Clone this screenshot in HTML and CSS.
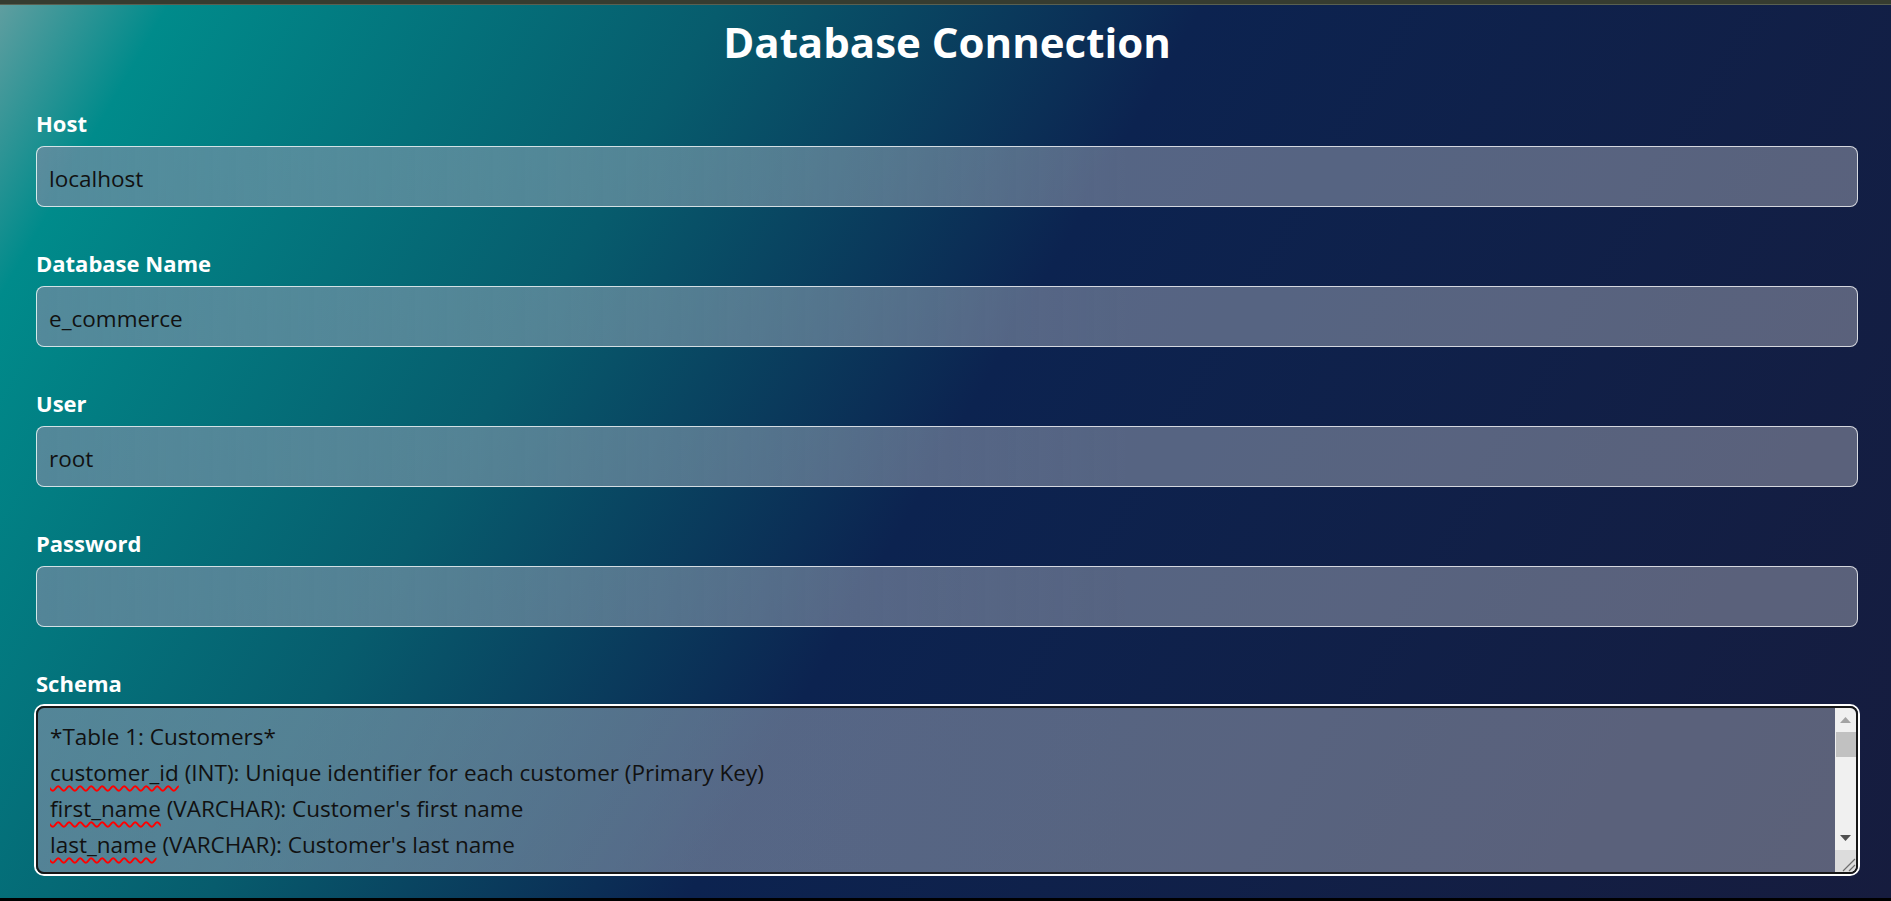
FILE: index.html
```html
<!DOCTYPE html>
<html lang="en">
<head>
<meta charset="utf-8">
<title>Database Connection</title>
<link rel="stylesheet" href="styles.css">
</head>
<body>
<div class="window">
  <div class="topbar"></div>
  <main class="page">
    <h1 class="title">Database Connection</h1>
    <form class="form">
      <div class="field">
        <label class="label" for="host">Host</label>
        <input class="input" id="host" type="text" value="localhost">
      </div>
      <div class="field">
        <label class="label" for="dbname">Database Name</label>
        <input class="input" id="dbname" type="text" value="e_commerce">
      </div>
      <div class="field">
        <label class="label" for="user">User</label>
        <input class="input" id="user" type="text" value="root">
      </div>
      <div class="field">
        <label class="label" for="password">Password</label>
        <input class="input" id="password" type="password" value="">
      </div>
      <div class="field">
        <label class="label">Schema</label>
        <div class="schema-box">
          <div class="schema-text">
            <div class="line">*Table 1: Customers*</div>
            <div class="line"><span class="typo">customer_id</span> (INT): Unique identifier for each customer (Primary Key)</div>
            <div class="line"><span class="typo">first_name</span> (VARCHAR): Customer's first name</div>
            <div class="line"><span class="typo">last_name</span> (VARCHAR): Customer's last name</div>
            <div class="line">email (VARCHAR): Customer's email address</div>
          </div>
          <div class="scrollbar">
            <div class="sb-btn sb-up">
              <svg width="11" height="6" viewBox="0 0 11 6"><path d="M0 6 L5.5 0 L11 6 Z" fill="#a3a3a3"/></svg>
            </div>
            <div class="sb-thumb"></div>
            <div class="sb-track"></div>
            <div class="sb-btn sb-down">
              <svg width="11" height="6" viewBox="0 0 11 6"><path d="M0 0 L11 0 L5.5 6 Z" fill="#505050"/></svg>
            </div>
            <div class="sb-corner">
              <svg width="21" height="22" viewBox="0 0 21 22"><path d="M20 9 L8 21 M20 15 L14 21" stroke="#6e6e6e" stroke-width="1.2" fill="none"/></svg>
            </div>
          </div>
        </div>
      </div>
    </form>
  </main>
  <div class="bottombar"></div>
</div>
</body>
</html>
```

FILE: styles.css
```css
html, body {
  margin: 0;
  padding: 0;
  height: 100%;
}

body {
  font-family: "Open Sans", "Noto Sans", sans-serif;
  overflow: hidden;
  background: #000;
}

.window {
  height: 901px;
  display: flex;
  flex-direction: column;
}

.topbar {
  flex: none;
  height: 4px;
  background: #363c30;
  border-bottom: 1px solid #596051;
}

.bottombar {
  flex: none;
  height: 3px;
  background: #000;
}

.page {
  flex: 1;
  min-height: 0;
  overflow: hidden;
  padding: 13px 33px 0 36px;
  background: linear-gradient(120deg, #5f9ea0 0%, #008b8b 7%, #075c6d 30%, #0c2350 50%, #161c3e 100%);
}

.title {
  margin: 0 0 42px;
  font-size: 42px;
  line-height: 48px;
  font-weight: 700;
  color: #fff;
  text-align: center;
}

.form {
  margin: 0;
}

.field {
  display: flex;
  flex-direction: column;
  gap: 8px;
  margin-bottom: 41px;
}

.label {
  font-size: 22px;
  line-height: 30px;
  font-weight: 700;
  color: #fff;
}

.input {
  box-sizing: border-box;
  width: 100%;
  height: 61px;
  margin: 0;
  padding: 3px 12px 0;
  border: 1px solid rgba(255, 255, 255, 0.75);
  border-radius: 8px;
  background:
    linear-gradient(90deg, rgba(88, 110, 140, 0.55), rgba(88, 110, 140, 0) 60%),
    rgba(255, 255, 255, 0.3);
  font-family: inherit;
  font-size: 22.5px;
  color: #111;
  outline: none;
}

.schema-box {
  box-sizing: border-box;
  height: 168px;
  display: flex;
  border: 2px solid #161616;
  border-radius: 8px;
  box-shadow: 0 0 0 2px #fff;
  background:
    linear-gradient(90deg, rgba(88, 110, 140, 0.5), rgba(88, 110, 140, 0) 60%),
    rgba(255, 255, 255, 0.3);
  overflow: hidden;
}

.schema-text {
  flex: 1;
  min-width: 0;
  padding: 11px 12px 0;
  font-size: 22.5px;
  line-height: 36px;
  color: #111;
  white-space: nowrap;
  overflow: hidden;
}

.typo {
  text-decoration: underline wavy #ff0000;
  text-decoration-thickness: 1.5px;
  text-decoration-skip-ink: none;
  text-underline-offset: 4px;
}

.scrollbar {
  flex: none;
  width: 21px;
  display: flex;
  flex-direction: column;
  background: #f0f0f0;
}

.sb-btn {
  flex: none;
  height: 24px;
  display: flex;
  align-items: center;
  justify-content: center;
}

.sb-thumb {
  flex: none;
  height: 25px;
  margin-left: 1px;
  background: #c1c1c1;
}

.sb-track {
  flex: 1;
}

.sb-corner {
  flex: none;
  height: 22px;
  background: #dcdcdc;
  display: flex;
}
```
